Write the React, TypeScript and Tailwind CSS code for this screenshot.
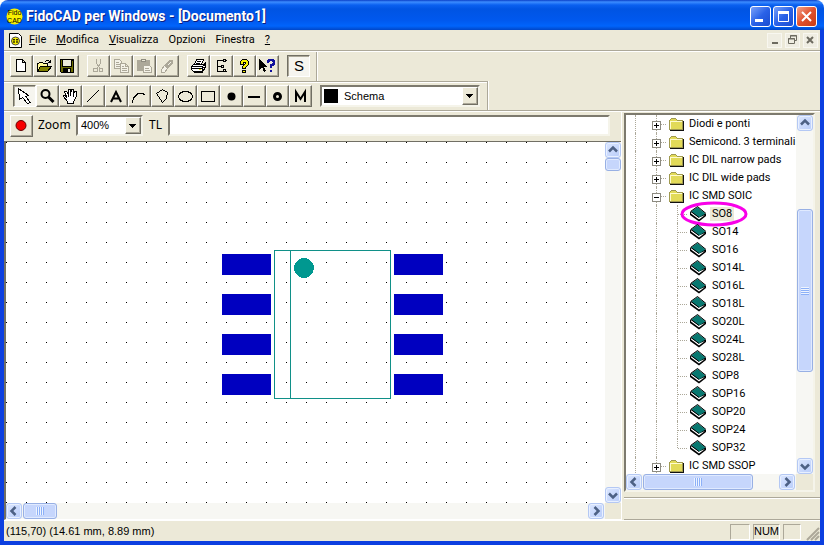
import React from "react"

const bevel = "border border-t-white border-l-white border-r-[#716f64] border-b-[#716f64] shadow-[inset_-1px_-1px_0_#aca899]"
const sunken = "border-2 border-t-[#7d7a6e] border-l-[#7d7a6e] border-r-[#f5f4ea] border-b-[#f5f4ea]"

const Icon = ({ children } : any) => (
    <svg width="16" height="16" viewBox="0 0 16 16" fill="none" stroke="#000" shapeRendering="crispEdges" aria-hidden="true" className="shrink-0">
        {children}
    </svg>
)

const ToolButton = (props : any) => {

    const { label , pressed , disabled , children } = props

    return(
        <button
            aria-label={label}
            title={label}
            disabled={disabled}
            className={pressed
                ? "flex h-[22px] w-[23px] items-center justify-start pl-[2px] border border-t-[#716f64] border-l-[#716f64] border-r-white border-b-white bg-[#f6f5ef] shadow-[inset_1px_1px_0_#aca899]"
                : "flex h-[22px] w-[23px] items-center justify-start pl-[2px] " + bevel}
        >
            {children}
        </button>
    )
}

const fileTools = [
    { label: "Nuovo", icon: <Icon><path d="M3.5 1.5h6l3 3v9h-9zM9.5 1.5v3h3" fill="#fff" /></Icon> },
    { label: "Apri", icon: (
        <Icon>
            <path d="M1.5 13.5v-8h1l1-1h3l1 1h4v3" fill="#fff89a" />
            <path d="M1.5 13.5l3-5h11l-4 5z" fill="#808000" />
            <path d="M9 3.5h1M10 2.5h3M13 3.5h1M14 2v3M12 4.5h3" />
        </Icon>
    ) },
    { label: "Salva", icon: (
        <Icon>
            <path d="M1.5 1.5h13v13h-12l-1-1z" fill="#6b6b00" />
            <path d="M4 2h8v6h-8z" fill="#ece9d8" stroke="none" />
            <path d="M3.5 2v6h9v-6M13 2.5h1" />
            <path d="M4 10h8v4h-8z" fill="#000" stroke="none" />
            <path d="M9 11h2v3h-2z" fill="#ece9d8" stroke="none" />
        </Icon>
    ) },
]

const editTools = [
    { label: "Taglia", icon: (
        <Icon>
            <g stroke="#aca899">
                <path d="M6.5 1v4l3 5M10.5 1v4l-3 5" />
                <circle cx="5.5" cy="12" r="2" /><circle cx="11" cy="12" r="2" />
            </g>
        </Icon>
    ) },
    { label: "Copia", icon: (
        <Icon>
            <g stroke="#aca899" fill="#f4f2e8">
                <path d="M1.5 1.5h5l2 2v7h-7zM3 4.5h3M3 6.5h4M3 8.5h4" />
                <path d="M7.5 5.5h5l3 3v6h-8zM12.5 5.5v3h3M9 8.5h2M9 10.5h5M9 12.5h5" />
            </g>
        </Icon>
    ) },
    { label: "Incolla", icon: (
        <Icon>
            <path d="M1.5 2.5h12v10h-12z" fill="#aca899" stroke="#aca899" />
            <path d="M5.5 1.5h4v2h-4z" fill="#ece9d8" stroke="#8f8c80" />
            <path d="M7.5 7.5h6l2 2v5h-8zM9 10.5h4M9 12.5h5" fill="#f4f2e8" stroke="#aca899" />
        </Icon>
    ) },
    { label: "Cancella", icon: (
        <Icon>
            <path d="M2.5 11.5l3-4 3 3-3 4h-3z" fill="#f4f2e8" stroke="#aca899" />
            <path d="M5.5 7.5l5-5h3v3l-5 5z" fill="#aca899" stroke="#aca899" />
            <path d="M9 7l3-3" stroke="#f4f2e8" />
        </Icon>
    ) },
]

const helpTools = [
    { label: "Stampa", icon: (
        <Icon>
            <path d="M4.5 6.5l2-5h7l-2 5z" fill="#fff" />
            <path d="M7 3.5h4M6 5.5h4" />
            <path d="M1.5 8.5l2-2h10l2-2v5l-3 4h-9l-2-2z" fill="#fff" />
            <path d="M1.5 8.5h11l3-3M12.5 8.5v5M2 10.5h11M4 14.5h8l3-4M13 7.5h2M13 9.5h2M13 11.5h2" />
            <path d="M9 11h2v1h-2z" fill="#e8e000" stroke="none" />
        </Icon>
    ) },
    { label: "Componenti", icon: (
        <Icon>
            <path d="M4.5 2v12M4 2.5h6M4 8.5h4M4 13.5h6M12 2.5h2M12 13.5h2" />
            <path d="M10.5 1.5h2v2h-2zM8.5 7.5h2v2h-2zM10.5 11.5h2v2h-2z" />
        </Icon>
    ) },
    { label: "Guida", icon: (
        <Icon>
            <path d="M4.5 6.5v-3l2-2h4l2 2v3l-3 3v1h-3v-2l3-3v-1h-2v2zM6.5 12.5h3v2h-3z" fill="#f8f000" />
        </Icon>
    ) },
    { label: "Guida rapida", icon: (
        <Icon>
            <path d="M0 1v11l3-3 2 5 2-1-2-4h4z" fill="#000" stroke="none" />
            <path d="M9 5V3h1V2h4v1h1v3h-1v1h-2v3M12 12v2" stroke="#10109c" strokeWidth="2" />
        </Icon>
    ) },
]

const drawTools = [
    { label: "Selezione", icon: <Icon><path d="M2.5 .5l1 11 3-2 5 6 3-1-5-6 3-1z" fill="#fff" /></Icon> },
    { label: "Zoom", icon: <Icon><g shapeRendering="auto"><circle cx="6.5" cy="6" r="4" fill="#ece9d8" strokeWidth="2" /><path d="M9.5 9l5 5" strokeWidth="3" /></g></Icon> },
    { label: "Sposta", icon: (
        <Icon>
            <path d="M5.5 15.5v-2l-4-5v-1h2l1 2v-1l-2-5h2l2 3v-5h2v4l1-4h2v5l1-3h2v4l-1 3-2 3v2z" fill="#fff" stroke="#000" />
            <path d="M6.5 6v3M8.5 5v3M11.5 6v3" />
        </Icon>
    ) },
    { label: "Linea", icon: <Icon><path d="M2 14L14 2" /></Icon> },
    { label: "Testo", icon: <Icon><path d="M3 14L8 4l5 10M5 10.5h6" strokeWidth="2" shapeRendering="auto" /></Icon> },
    { label: "Curva", icon: <Icon><path d="M1 14.5l2-5 4-4h4l3 1" /></Icon> },
    { label: "Poligono", icon: <Icon><path d="M2.5 5.5l6-4 5 3-1 6-4 4z" /></Icon> },
    { label: "Ellisse", icon: <Icon><ellipse cx="8.5" cy="8.5" rx="7" ry="5" /></Icon> },
    { label: "Rettangolo", icon: <Icon><path d="M1.5 3.5h13v10h-13z" /></Icon> },
    { label: "Connessione", icon: <Icon><circle cx="8.5" cy="8.5" r="4" fill="#000" stroke="none" shapeRendering="auto" /></Icon> },
    { label: "Pista", icon: <Icon><path d="M2 9h12" strokeWidth="2" /></Icon> },
    { label: "Piazzola", icon: <Icon><circle cx="8.5" cy="8.5" r="3" strokeWidth="3" shapeRendering="auto" /></Icon> },
    { label: "Macro", icon: <Icon><path d="M4 14V4l4.500 7L13 4v10" strokeWidth="2" shapeRendering="auto" /></Icon> },
]

const Folder = () => (
    <svg width="17" height="14" viewBox="0 0 17 14" shapeRendering="crispEdges" aria-hidden="true" className="shrink-0">
        <path d="M.5 12.5v-9l2-2h4l2 2h5v9z" fill="#e2da58" stroke="#a09a50" />
        <path d="M1 4.5h12M1.5 4v8" stroke="#fffbd0" />
        <path d="M1 13.5h14M14.5 4v10" stroke="#111" />
    </svg>
)

const Book = () => (
    <svg width="17" height="16" viewBox="0 0 17 16" aria-hidden="true" className="shrink-0">
        <path d="M0 6v3l9 6.500L16 10V8z" fill="#000" />
        <path d="M1 7.500L9 13.500l6-4.500-6 2.500-8-5.500z" fill="#fff" />
        <path d="M1 5.500L7.500 1 15.500 7.500 9 11.500z" fill="#087870" />
        <path d="M.5 5.500L7.500.5 16 7.500M1 5.500l8 6" stroke="#000" fill="none" />
    </svg>
)

const folders = ["Diodi e ponti", "Semicond. 3 terminali", "IC DIL narrow pads", "IC DIL wide pads", "IC SMD SOIC"]
const parts = ["SO8", "SO14", "SO16", "SO14L", "SO16L", "SO18L", "SO20L", "SO24L", "SO28L", "SOP8", "SOP16", "SOP20", "SOP24", "SOP32"]

const Guides = () => (
    <>
        <span className="w-[10px] shrink-0 self-stretch border-r border-dotted border-[#aca899]"></span>
        <span className="w-[21px] shrink-0 self-stretch border-r border-dotted border-[#aca899]"></span>
    </>
)

const FolderRow = ({ name , open } : any) => (
    <li className="relative flex h-[18px] items-center whitespace-nowrap">
        <Guides />
        <button aria-label={(open ? "Chiudi " : "Apri ") + name} className="absolute left-[26px] top-[6px] bg-white">
            <svg width="9" height="9" viewBox="0 0 9 9" fill="none" shapeRendering="crispEdges">
                <path d="M.5 .5h8v8h-8z" stroke="#8c8a80" />
                <path d={open ? "M2 4.500h5" : "M2 4.500h5M4.500 2v5"} stroke="#000" />
            </svg>
        </button>
        <span className="mr-[3px] w-[9px] shrink-0 border-b border-dotted border-[#aca899]"></span>
        <Folder />
        <span className="ml-[3px]">{name}</span>
    </li>
)

const PartRow = ({ name , selected , last } : any) => (
    <li className="relative flex h-[18px] items-center whitespace-nowrap">
        <Guides />
        <span className={last ? "h-[9px] w-[21px] self-start border-r border-dotted border-[#aca899]" : "w-[21px] self-stretch border-r border-dotted border-[#aca899]"}></span>
        <span className="mr-[3px] w-[9px] border-b border-dotted border-[#aca899]"></span>
        <Book />
        <span className={selected ? "ml-[3px] bg-[#ece9d8] px-[2px]" : "ml-[3px] px-[2px]"}>{name}</span>
        {selected && (
            <svg className="absolute -top-[4px] left-[54px]" width="68" height="26" viewBox="0 0 68 26" fill="none">
                <ellipse cx="34" cy="13" rx="32" ry="11" stroke="#f800e8" strokeWidth="3" />
            </svg>
        )}
    </li>
)

const arrows : any = {
    up: "M4 9.500l4-4 4 4",
    down: "M4 6.500l4 4 4-4",
    left: "M9.500 4l-4 4 4 4",
    right: "M6.500 4l4 4-4 4",
}

const ScrollButton = ({ dir , label } : any) => (
    <button aria-label={label} className="flex h-4 w-4 shrink-0 items-center justify-center rounded-[3px] border border-[#b4c8f4] bg-linear-to-br from-[#dbe6ff] to-[#b9cdfa] shadow-[inset_0_0_0_1px_#e8f0ff]">
        <svg width="16" height="16" viewBox="0 0 16 16" fill="none" className="shrink-0"><path d={arrows[dir]} stroke="#4d6185" strokeWidth="2.500" /></svg>
    </button>
)

const thumb = "flex shrink-0 items-center justify-center rounded-[3px] border border-[#98b0e4] shadow-[inset_0_0_0_1px_#e0eaff]"

const GripV = () => <span className="h-[8px] w-[8px] bg-[repeating-linear-gradient(to_right,#eef4fe_0_1px,#8cb0f8_1px_2px)]"></span>
const GripH = () => <span className="h-[8px] w-[8px] bg-[repeating-linear-gradient(to_bottom,#eef4fe_0_1px,#8cb0f8_1px_2px)]"></span>

const DropArrow = () => (
    <span className={"pointer-events-none flex w-4 shrink-0 items-center justify-center bg-[#ece9d8] " + bevel}>
        <svg width="8" height="4" viewBox="0 0 8 4" shapeRendering="crispEdges"><path d="M0 0h7L3.500 4z" /></svg>
    </span>
)

const TitleBar = () => (
    <header className="flex h-[30px] shrink-0 items-center rounded-t-lg bg-[linear-gradient(to_bottom,#0a3fc8_0,#3c8cff_2px,#0a60f0_5px,#0054e3_9px,#0058ee_20px,#0064fc_26px,#0046c8_30px)] pl-[6px] pr-[7px] pt-[3px]">
        <svg width="17" height="17" viewBox="0 0 17 17" aria-hidden="true">
            <circle cx="8.500" cy="8.500" r="8" fill="#f8f000" />
            <text x="8.500" y="7" textAnchor="middle" fontSize="7" fontFamily="Liberation Sans, sans-serif">Fido</text>
            <text x="8.500" y="15" textAnchor="middle" fontSize="7" fontFamily="Liberation Sans, sans-serif">CAD</text>
        </svg>
        <h1 className="ml-[3px] flex-1 whitespace-nowrap font-['Roboto',sans-serif] text-[14px] font-bold text-white [text-shadow:1px_1px_0_#0f1f80]">FidoCAD per Windows - [Documento1]</h1>
        <div className="flex gap-[2px]">
            <button aria-label="Riduci a icona" className="h-[21px] w-[21px] rounded-[3px] border border-white bg-linear-to-br from-[#7aa0f8] via-[#2a62e8] to-[#1a4cd0]">
                <svg width="19" height="19" viewBox="0 0 19 19"><path d="M4 12h8v3H4z" fill="#fff" /></svg>
            </button>
            <button aria-label="Ingrandisci" className="h-[21px] w-[21px] rounded-[3px] border border-white bg-linear-to-br from-[#7aa0f8] via-[#2a62e8] to-[#1a4cd0]">
                <svg width="19" height="19" viewBox="0 0 19 19" fill="none" stroke="#fff"><path d="M4.500 5.500h10v9h-10z" /><path d="M4 5.500h11" strokeWidth="3" /></svg>
            </button>
            <button aria-label="Chiudi" className="h-[21px] w-[21px] rounded-[3px] border border-white bg-linear-to-br from-[#f0a088] via-[#e0502c] to-[#c83c14]">
                <svg width="19" height="19" viewBox="0 0 19 19" stroke="#fff" strokeWidth="2"><path d="M5 5l9 9M14 5l-9 9" /></svg>
            </button>
        </div>
    </header>
)

const MenuBar = () => (
    <nav className="flex h-[20px] shrink-0 items-center pl-[5px] font-['Roboto',sans-serif] text-[11px]">
        <svg width="13" height="15" viewBox="0 0 13 15" aria-hidden="true">
            <path d="M.5 .5h9l3 3v11H.5z" fill="#fff" stroke="#000" />
            <circle cx="6.500" cy="8" r="4" fill="#f8f000" stroke="#444" />
            <path d="M4 6.500h2M7 6.500h2M4 9h2M7 9h2M5 6v4M8 6v4" stroke="#000" strokeWidth=".7" />
        </svg>
        <div className="ml-[7px] flex flex-1 gap-[10px] whitespace-nowrap">
            <button><u>F</u>ile</button>
            <button><u>M</u>odifica</button>
            <button><u>V</u>isualizza</button>
            <button>Opzioni</button>
            <button>Finestra</button>
            <button><u>?</u></button>
        </div>
        <div className="flex gap-[3px] pr-[2px]">
            <button aria-label="Riduci documento" className="h-[15px] w-[15px] border border-[#f8f7f0] bg-[#efede2]">
                <svg width="13" height="13" viewBox="0 0 13 13"><path d="M4 8h6v2H4z" fill="#6d6b60" /></svg>
            </button>
            <button aria-label="Ripristina documento" className="h-[15px] w-[15px] border border-[#f8f7f0] bg-[#efede2]">
                <svg width="13" height="13" viewBox="0 0 13 13" fill="none" stroke="#6d6b60"><path d="M4.500 4V1.500h6v5H9M4 2h7M2.500 4.500h6v5h-6zM2 5h7" /></svg>
            </button>
            <button aria-label="Chiudi documento" className="h-[15px] w-[15px] border border-[#f8f7f0] bg-[#efede2]">
                <svg width="13" height="13" viewBox="0 0 13 13" stroke="#6d6b60" strokeWidth="2"><path d="M3 3l6 6M9 3l-6 6" /></svg>
            </button>
        </div>
    </nav>
)

const ToolGroup = ({ tools , disabled } : any) => (
    <div className="flex">
        {tools.map((tool : any) => (
            <ToolButton key={tool.label} label={tool.label} disabled={disabled}>{tool.icon}</ToolButton>
        ))}
    </div>
)

const Toolbars = () => (
    <div className="shrink-0 border-t border-[#aca899]">
        <div className="flex border-t border-white">
            <div className="flex h-[29px] items-center gap-2 border-r border-[#aca899] pb-[2px] pl-[6px] pr-[6px] shadow-[1px_0_0_#fff]">
                <ToolGroup tools={fileTools} />
                <ToolGroup tools={editTools} disabled />
                <ToolGroup tools={helpTools} />
                <ToolButton label="Snap" pressed>
                    <span className="w-[18px] text-center font-['Liberation_Sans',sans-serif] text-[15px] leading-none">S</span>
                </ToolButton>
            </div>
        </div>
        <div className="flex border-b border-[#aca899]">
            <div className="flex h-[29px] items-center gap-2 border-r border-t border-[#aca899] pl-[9px] pr-[7px] shadow-[inset_0_1px_0_#fff,1px_0_0_#fff]">
                <div className="flex">
                    {drawTools.map((tool, i) => (
                        <ToolButton key={tool.label} label={tool.label} pressed={i === 0}>{tool.icon}</ToolButton>
                    ))}
                </div>
                <div className={"flex h-[22px] w-[160px] items-stretch bg-white " + sunken}>
                    <span className="m-[2px] w-[14px] bg-black"></span>
                    <select aria-label="Strato" className="min-w-0 flex-1 appearance-none bg-white pl-[4px] font-['Liberation_Sans',sans-serif] text-[11px] outline-none">
                        <option>Schema</option>
                    </select>
                    <DropArrow />
                </div>
            </div>
        </div>
    </div>
)

const ZoomBar = () => (
    <div className="flex h-[30px] shrink-0 items-center border-t border-white pb-[2px] pl-[6px] pr-[11px]">
        <ToolButton label="Registra">
            <svg width="16" height="13" viewBox="0 0 16 13"><circle cx="8" cy="6.500" r="5" fill="#f80000" stroke="#600" /></svg>
        </ToolButton>
        <label htmlFor="zoom" className="ml-[5px] w-[38px] pb-[2px] text-xs">Zoom</label>
        <div className={"flex h-[21px] w-[67px] items-stretch bg-white " + sunken}>
            <select id="zoom" className="min-w-0 flex-1 appearance-none bg-white pl-[3px] font-['Liberation_Sans',sans-serif] text-[11px] outline-none">
                <option>400%</option>
            </select>
            <DropArrow />
        </div>
        <label htmlFor="command" className="ml-[6px] w-[19px] pb-[2px] text-xs">TL</label>
        <input id="command" type="text" className={"h-[21px] min-w-0 flex-1 bg-white px-1 text-[11px] outline-none " + sunken} />
    </div>
)

const Drawing = () => (
    <svg className="h-full w-full bg-white" shapeRendering="crispEdges" role="img" aria-label="SO8">
        <defs>
            <pattern id="grid" width="20" height="20" patternUnits="userSpaceOnUse">
                <rect width="1" height="1" fill="#000" />
            </pattern>
        </defs>
        <rect width="100%" height="100%" fill="url(#grid)" />
        <g fill="#0000c0">
            {[112, 152, 192, 232].map((y) => (
                <React.Fragment key={y}>
                    <rect x="216" y={y} width="49" height="21" />
                    <rect x="388" y={y} width="49" height="21" />
                </React.Fragment>
            ))}
        </g>
        <g stroke="#109088" fill="none">
            <rect x="268.500" y="108.500" width="116" height="148" />
            <path d="M284.500 108v149" />
        </g>
        <circle cx="298" cy="126" r="10" fill="#009890" />
    </svg>
)

const DocumentView = () => (
    <div className="grid min-h-0 flex-1 grid-cols-[minmax(0,1fr)_16px] grid-rows-[minmax(0,1fr)_16px] border-b border-l-2 border-t border-b-white border-l-[#716f64] border-t-[#716f64]">
        <Drawing />
        <div className="flex flex-col justify-between bg-[#f7f7f3]">
            <div>
                <ScrollButton dir="up" label="Scorri su" />
                <div className={"h-[13px] w-4 bg-[#c6d6fc] " + thumb}></div>
            </div>
            <ScrollButton dir="down" label="Scorri giù" />
        </div>
        <div className="flex justify-between bg-[#f7f7f3] pr-[1px]">
            <div className="flex gap-[1px]">
                <ScrollButton dir="left" label="Scorri a sinistra" />
                <div className={"h-4 w-[34px] bg-[#c6d6fc] " + thumb}><GripV /></div>
            </div>
            <ScrollButton dir="right" label="Scorri a destra" />
        </div>
        <div className="bg-[#ece9d8]"></div>
    </div>
)

const Library = () => (
    <aside className="flex w-[199px] shrink-0 flex-col border-l border-t border-white pl-[2px]">
        <div className={"mr-[5px] mt-[1px] grid min-h-0 flex-1 grid-cols-[minmax(0,1fr)_17px] grid-rows-[minmax(0,1fr)_16px] bg-white " + sunken}>
            <ul className="overflow-hidden font-['Roboto',sans-serif] text-[11px] leading-[14px]">
                {folders.map((name) => <FolderRow key={name} name={name} open={name === "IC SMD SOIC"} />)}
                {parts.map((name) => <PartRow key={name} name={name} selected={name === "SO8"} last={name === "SOP32"} />)}
                <FolderRow name="IC SMD SSOP" />
            </ul>
            <div className="flex flex-col items-end bg-[#f7f7f3]">
                <ScrollButton dir="up" label="Libreria su" />
                <div className="basis-[78px]"></div>
                <div className={"h-[163px] w-4 bg-[#c6d6fc] " + thumb}><GripH /></div>
                <div className="flex-1"></div>
                <ScrollButton dir="down" label="Libreria giù" />
            </div>
            <div className="flex bg-[#f7f7f3] pr-[1px]">
                <ScrollButton dir="left" label="Libreria a sinistra" />
                <div className={"ml-[1px] h-4 w-[110px] bg-[#c6d6fc] " + thumb}><GripV /></div>
                <div className="flex-1"></div>
                <ScrollButton dir="right" label="Libreria a destra" />
            </div>
            <div className="bg-[#ece9d8]"></div>
        </div>
        <div className="mt-[5px] h-[23px] border-b border-t border-[#aca899] shadow-[inset_0_1px_0_#fff]"></div>
    </aside>
)

const panel = "flex h-[16px] items-center justify-center border border-t-[#aca899] border-l-[#aca899] border-r-white border-b-white"

const StatusBar = () => (
    <footer className="flex h-[21px] shrink-0 items-center gap-[3px] border-t border-white pl-[2px] pt-[1px] font-['Liberation_Sans',sans-serif] text-[11px]">
        <span className="flex-1">(115,70) (14.61 mm, 8.89 mm)</span>
        <span className={"w-[20px] " + panel}></span>
        <span className={"w-[27px] " + panel}>NUM</span>
        <span className={"w-[18px] " + panel}></span>
        <svg width="16" height="16" viewBox="0 0 16 16" className="self-end" aria-hidden="true">
            <path d="M3 15L15 3M7 15l8-8M11 15l4-4" stroke="#aca899" strokeWidth="2" />
        </svg>
    </footer>
)

const App = () => {
    return(
        <div className="flex h-screen flex-col overflow-hidden bg-white font-['Noto_Sans',sans-serif] text-black">
            <TitleBar />
            <main className="flex min-h-0 flex-1 flex-col border-x-4 border-b-4 border-[#0c3fe0] bg-[#ece9d8]">
                <MenuBar />
                <Toolbars />
                <div className="flex min-h-0 flex-1">
                    <section className="flex min-w-0 flex-1 flex-col">
                        <ZoomBar />
                        <DocumentView />
                    </section>
                    <Library />
                </div>
                <StatusBar />
            </main>
        </div>
    )
}

export default App
